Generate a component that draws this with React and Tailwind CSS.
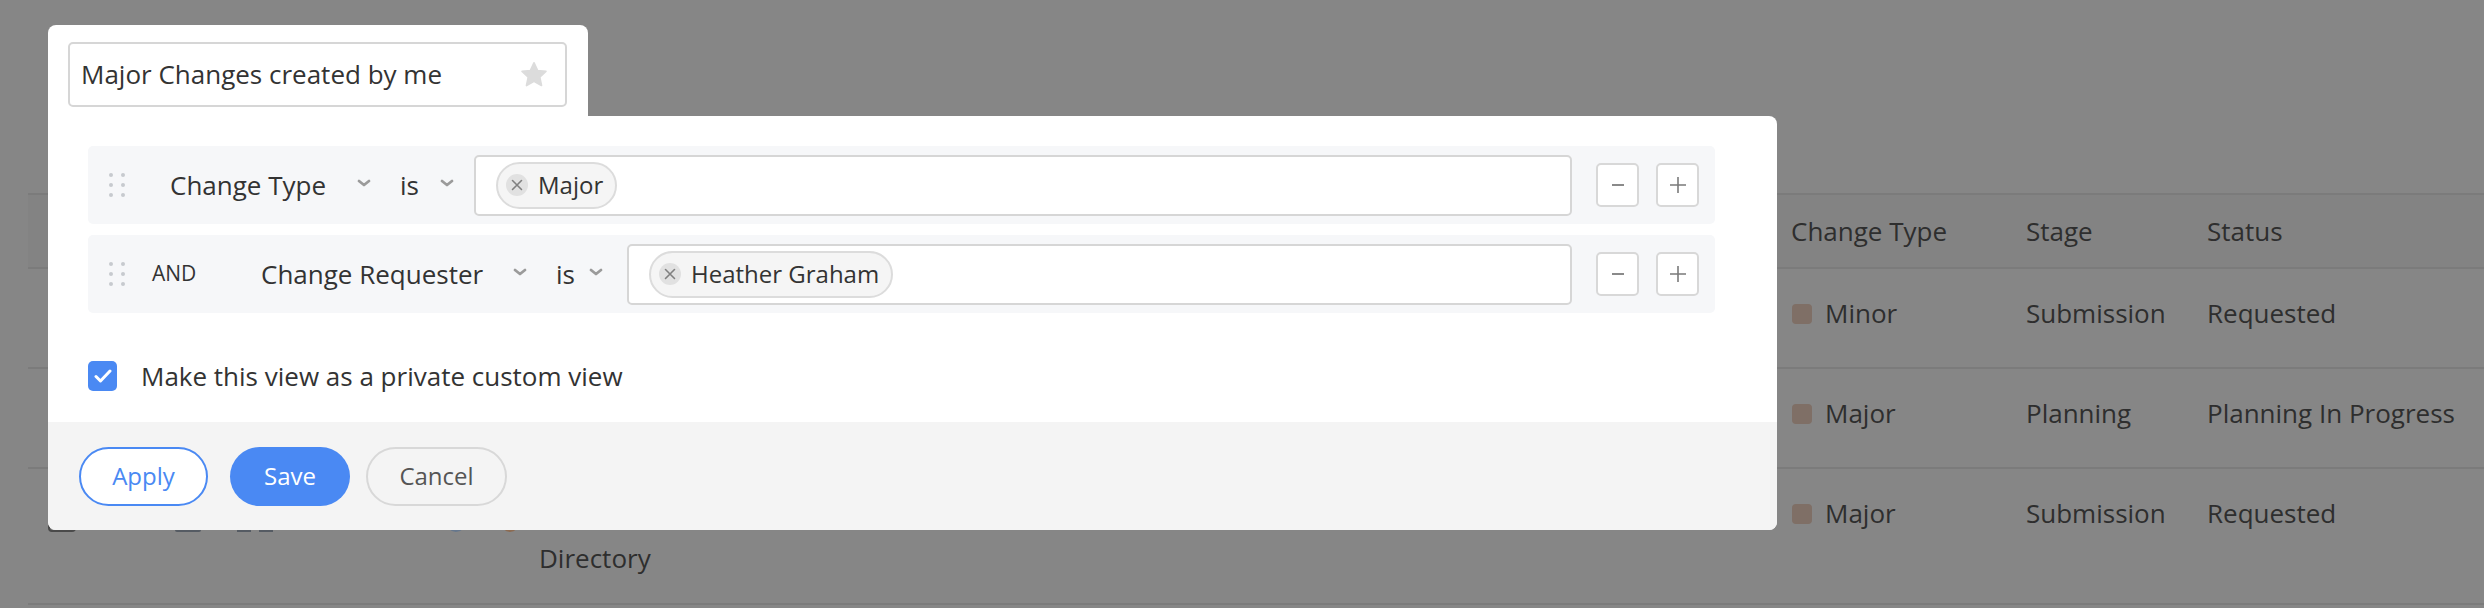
import React from 'react'

const rows = [
  { type: 'Minor', stage: 'Submission', status: 'Requested' },
  { type: 'Major', stage: 'Planning', status: 'Planning In Progress' },
  { type: 'Major', stage: 'Submission', status: 'Requested', extra: 'Directory' },
]

function Chevron() {
  return (
    <svg width="14" height="8" viewBox="0 0 14 8" className="mb-[4px]">
      <path d="M2 2l5 4 5-4" fill="none" stroke="#9b9b9b" strokeWidth="2.8" strokeLinecap="round" strokeLinejoin="round" />
    </svg>
  )
}

function DragDots() {
  return (
    <div className="grid grid-cols-2 gap-x-[7px] gap-y-[6px] w-[16px]">
      {[0, 1, 2, 3, 4, 5].map((i) => (
        <span key={i} className="w-[4px] h-[4px] rounded-full bg-[#c7cacf]"></span>
      ))}
    </div>
  )
}

function Chip({ label }) {
  return (
    <div className="h-[47px] rounded-full border-2 border-[#dcdcdc] bg-[#f5f5f5] pl-[8px] pr-[12px] flex items-center gap-[10px]">
      <span className="w-[22px] h-[22px] rounded-full bg-[#e1e1e1] flex items-center justify-center">
        <svg width="12" height="12" viewBox="0 0 12 12">
          <path d="M1.5 1.5l9 9M10.5 1.5l-9 9" stroke="#808080" strokeWidth="1.6" strokeLinecap="round" />
        </svg>
      </span>
      <span className="text-[24px] text-[#333]">{label}</span>
    </div>
  )
}

function StepButtons() {
  return (
    <>
      <button className="ml-[24px] w-[43px] h-[44px] border-2 border-[#d8d8d8] rounded-[5px] bg-white flex items-center justify-center">
        <span className="w-[12px] h-[2px] bg-[#8a8a8a]"></span>
      </button>
      <button className="ml-[17px] w-[43px] h-[44px] border-2 border-[#d8d8d8] rounded-[5px] bg-white flex items-center justify-center">
        <svg width="18" height="18" viewBox="0 0 18 18">
          <path d="M9 1v16M1 9h16" stroke="#7a7a7a" strokeWidth="1.6" />
        </svg>
      </button>
    </>
  )
}

function ConditionRow({ and, field, fieldWidth, isWidth, inputGap, value }) {
  return (
    <div className="h-[78px] bg-[#f6f7f9] rounded-[5px] flex items-center pl-[21px] pr-[16px]">
      <DragDots />
      {and ? (
        <span className="ml-[27px] w-[109px] text-[21px] text-[#333]">AND</span>
      ) : (
        <span className="w-[45px]"></span>
      )}
      <span className="text-[26px] text-[#333] whitespace-nowrap" style={{ width: fieldWidth }}>{field}</span>
      <Chevron />
      <span className="text-[26px] text-[#333] ml-[29px]" style={{ width: isWidth }}>is</span>
      <Chevron />
      <div
        className="flex-1 h-[61px] border-2 border-[#d6d6d6] rounded-[5px] bg-white flex items-center pl-[20px]"
        style={{ marginLeft: inputGap }}
      >
        <Chip label={value} />
      </div>
      <StepButtons />
    </div>
  )
}

function BackgroundTable() {
  return (
    <div className="pt-[193px] pl-[28px] text-[26px] text-[#2e2e2e]">
      <div className="grid grid-cols-[1763px_235px_181px_1fr] h-[74px] items-center bg-[#838383] border-t-2 border-[#7b7b7b]">
        <div></div>
        <div>Change Type</div>
        <div>Stage</div>
        <div>Status</div>
      </div>
      {rows.map((row, index) => (
        <div
          key={index}
          className={`grid grid-cols-[1763px_235px_181px_1fr] items-start pt-[22px] leading-[45px] border-t-2 border-[#7b7b7b] ${index === 2 ? 'h-[138px] border-b-2' : 'h-[100px]'}`}
        >
          <div>
            {row.extra && (
              <>
                {/* icons of the row, mostly hidden behind the editor */}
                <div className="h-[45px] flex items-end pb-[4px]">
                  <span className="ml-[20px] w-[28px] h-[28px] border-2 border-[#4a4a4a] rounded-[4px]"></span>
                  <span className="ml-[99px] w-[26px] h-[4px] bg-[#555b63] rounded-sm"></span>
                  <span className="ml-[36px] w-[14px] h-[8px] bg-[#555b63]"></span>
                  <span className="ml-[8px] w-[14px] h-[8px] bg-[#555b63]"></span>
                  <span className="ml-[173px] w-[20px] h-[20px] rounded-full bg-[#66778d]"></span>
                  <span className="ml-[35px] w-[18px] h-[18px] rounded-full bg-[#8c6b52]"></span>
                </div>
                <div className="pl-[511px]">{row.extra}</div>
              </>
            )}
          </div>
          <div className="flex items-center h-[45px]">
            <span className="ml-[1px] w-[20px] h-[20px] rounded-[4px] bg-[#7f6f66]"></span>
            <span className="ml-[13px]">{row.type}</span>
          </div>
          <div>{row.stage}</div>
          <div className="whitespace-nowrap">{row.status}</div>
        </div>
      ))}
    </div>
  )
}

export default function App() {
  return (
    <div className="relative w-[2484px] h-[608px] overflow-hidden bg-[#868686] font-['Open_Sans','Noto_Sans',sans-serif]">
      <BackgroundTable />

      {/* Custom view editor */}
      <div className="absolute left-[48px] top-[25px]">
        <div className="w-[540px] h-[91px] bg-white rounded-t-[8px] pt-[17px] pl-[20px]">
          <div className="w-[499px] h-[65px] border-2 border-[#d6d6d6] rounded-[5px] flex items-center justify-between pl-[11px] pr-[17px]">
            <span className="text-[26px] text-[#333]">Major Changes created by me</span>
            <svg width="28" height="27" viewBox="0 0 24 23">
              <path d="M12 1.5l3.1 6.6 7.1.8-5.3 4.9 1.5 7.1L12 17.3l-6.4 3.6 1.5-7.1L1.8 8.9l7.1-.8z" fill="#dcdcdc" stroke="#dcdcdc" strokeWidth="1.5" strokeLinejoin="round" />
            </svg>
          </div>
        </div>
        <div className="w-[1729px] bg-white rounded-b-[8px] rounded-tr-[8px] overflow-hidden">
          <div className="pt-[30px] pl-[40px] pr-[62px] flex flex-col gap-[11px]">
            <ConditionRow field="Change Type" fieldWidth={187} isWidth={40} inputGap={20} value="Major" />
            <ConditionRow and field="Change Requester" fieldWidth={252} isWidth={33} inputGap={24} value="Heather Graham" />
          </div>
          <div className="mt-[48px] h-[30px] pl-[40px] flex items-center">
            <span className="w-[29px] h-[30px] rounded-[5px] bg-[#4a89f3] flex items-center justify-center">
              <svg width="18" height="14" viewBox="0 0 18 14">
                <path d="M2 7.5l4.5 4.5L16 2" fill="none" stroke="white" strokeWidth="3" strokeLinecap="round" strokeLinejoin="round" />
              </svg>
            </span>
            <span className="ml-[24px] text-[26px] leading-[30px] text-[#333]">Make this view as a private custom view</span>
          </div>
          <div className="mt-[31px] h-[108px] bg-[#f4f4f4] flex items-center pl-[31px]">
            <button className="w-[129px] h-[59px] rounded-full border-2 border-[#4a89f3] bg-white text-[24px] text-[#4a89f3]">Apply</button>
            <button className="ml-[22px] w-[120px] h-[59px] rounded-full bg-[#4a89f3] text-[24px] text-white">Save</button>
            <button className="ml-[16px] w-[141px] h-[59px] rounded-full border-2 border-[#d8d8d8] text-[24px] text-[#555]">Cancel</button>
          </div>
        </div>
      </div>
    </div>
  )
}
